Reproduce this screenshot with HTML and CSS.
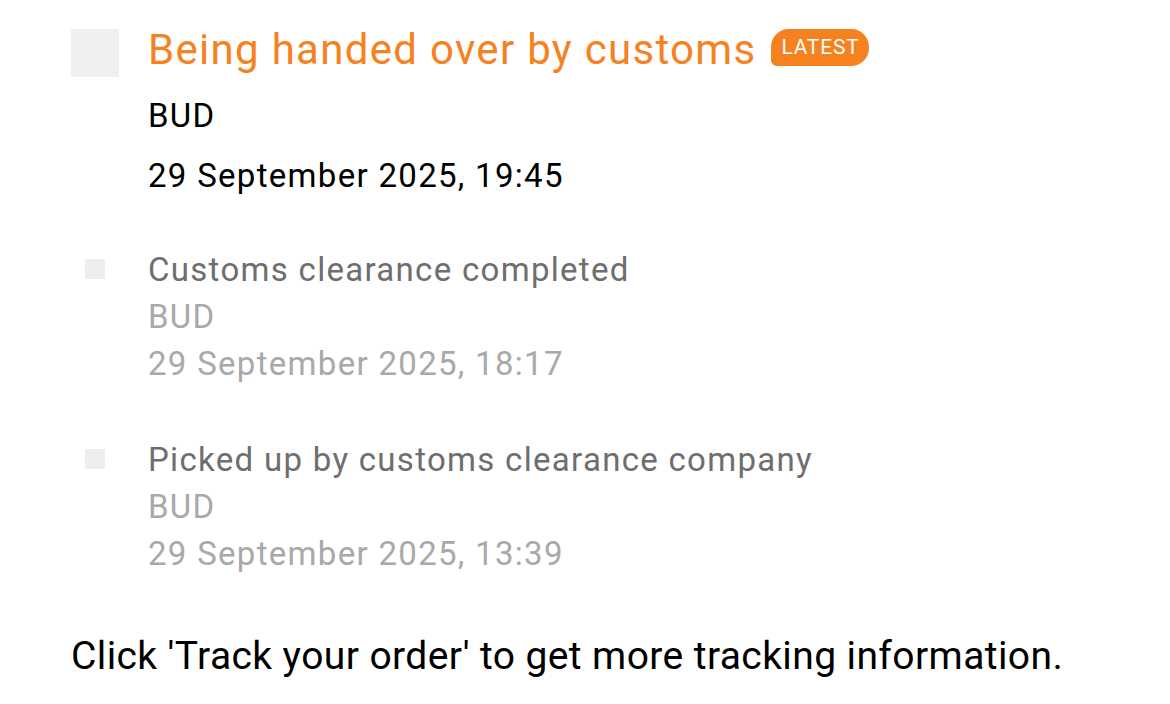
FILE: index.html
```html
<!DOCTYPE html>
<html lang="en">
<head>
    <meta charset="UTF-8">
    <meta name="viewport" content="width=device-width, initial-scale=1.0">
    <title>Tracking</title>
    <link rel="stylesheet" href="styles.css">
</head>
<body>
    <div class="timeline">
        <div class="event event-latest">
            <div class="marker"><span class="dot dot-big"></span></div>
            <div class="info">
                <div class="title">Being handed over by customs<span class="badge">LATEST</span></div>
                <div class="place">BUD</div>
                <div class="time">29 September 2025, 19:45</div>
            </div>
        </div>
        <div class="event">
            <div class="marker"><span class="dot"></span></div>
            <div class="info">
                <div class="title">Customs clearance completed</div>
                <div class="place">BUD</div>
                <div class="time">29 September 2025, 18:17</div>
            </div>
        </div>
        <div class="event">
            <div class="marker"><span class="dot"></span></div>
            <div class="info">
                <div class="title">Picked up by customs clearance company</div>
                <div class="place">BUD</div>
                <div class="time">29 September 2025, 13:39</div>
            </div>
        </div>
    </div>
    <p class="note">Click 'Track your order' to get more tracking information.</p>
</body>
</html>
```

FILE: styles.css
```css
body {
    margin: 0;
    background: #fff;
    font-family: Roboto, "Liberation Sans", sans-serif;
    color: #000;
}
.timeline {
    padding: 29px 0 0 71px;
}
.event {
    display: flex;
    margin-top: 49px;
}
.event-latest {
    margin-top: 0;
}
.event-latest + .event {
    margin-top: 40px;
}
.marker {
    width: 77px;
    flex: none;
}
.dot {
    display: block;
    width: 20px;
    height: 20px;
    background: #eeeeee;
    margin: 13px 0 0 14px;
}
.dot-big {
    width: 48px;
    height: 48px;
    margin: 0;
    background: #efefef;
}
.info {
    display: flex;
    flex-direction: column;
}
.title,
.place,
.time {
    font-size: 33px;
    line-height: 47px;
    letter-spacing: 1.3px;
    white-space: nowrap;
}
.title {
    color: #6e6e6e;
}
.place, .time {
    color: #a9a9a9;
}
.event-latest .title {
    font-size: 42px;
    line-height: 42px;
    letter-spacing: 1.3px;
    color: #f5821f;
}
.event-latest .place {
    margin-top: 15px;
}
.event-latest .place,
.event-latest .time {
    color: #000;
    line-height: 60px;
}
.badge {
    display: inline-block;
    vertical-align: top;
    margin-left: 15px;
    font-size: 21px;
    line-height: 37px;
    letter-spacing: 0.8px;
    padding: 0 9px 0 10px;
    color: #fff;
    background: #f5821f;
    border-radius: 18px 18px 18px 6px;
}
.note {
    margin: 0;
    padding: 55px 0 0 71px;
    font-size: 39px;
    line-height: 48px;
    letter-spacing: 0.4px;
    color: #000;
}
```
